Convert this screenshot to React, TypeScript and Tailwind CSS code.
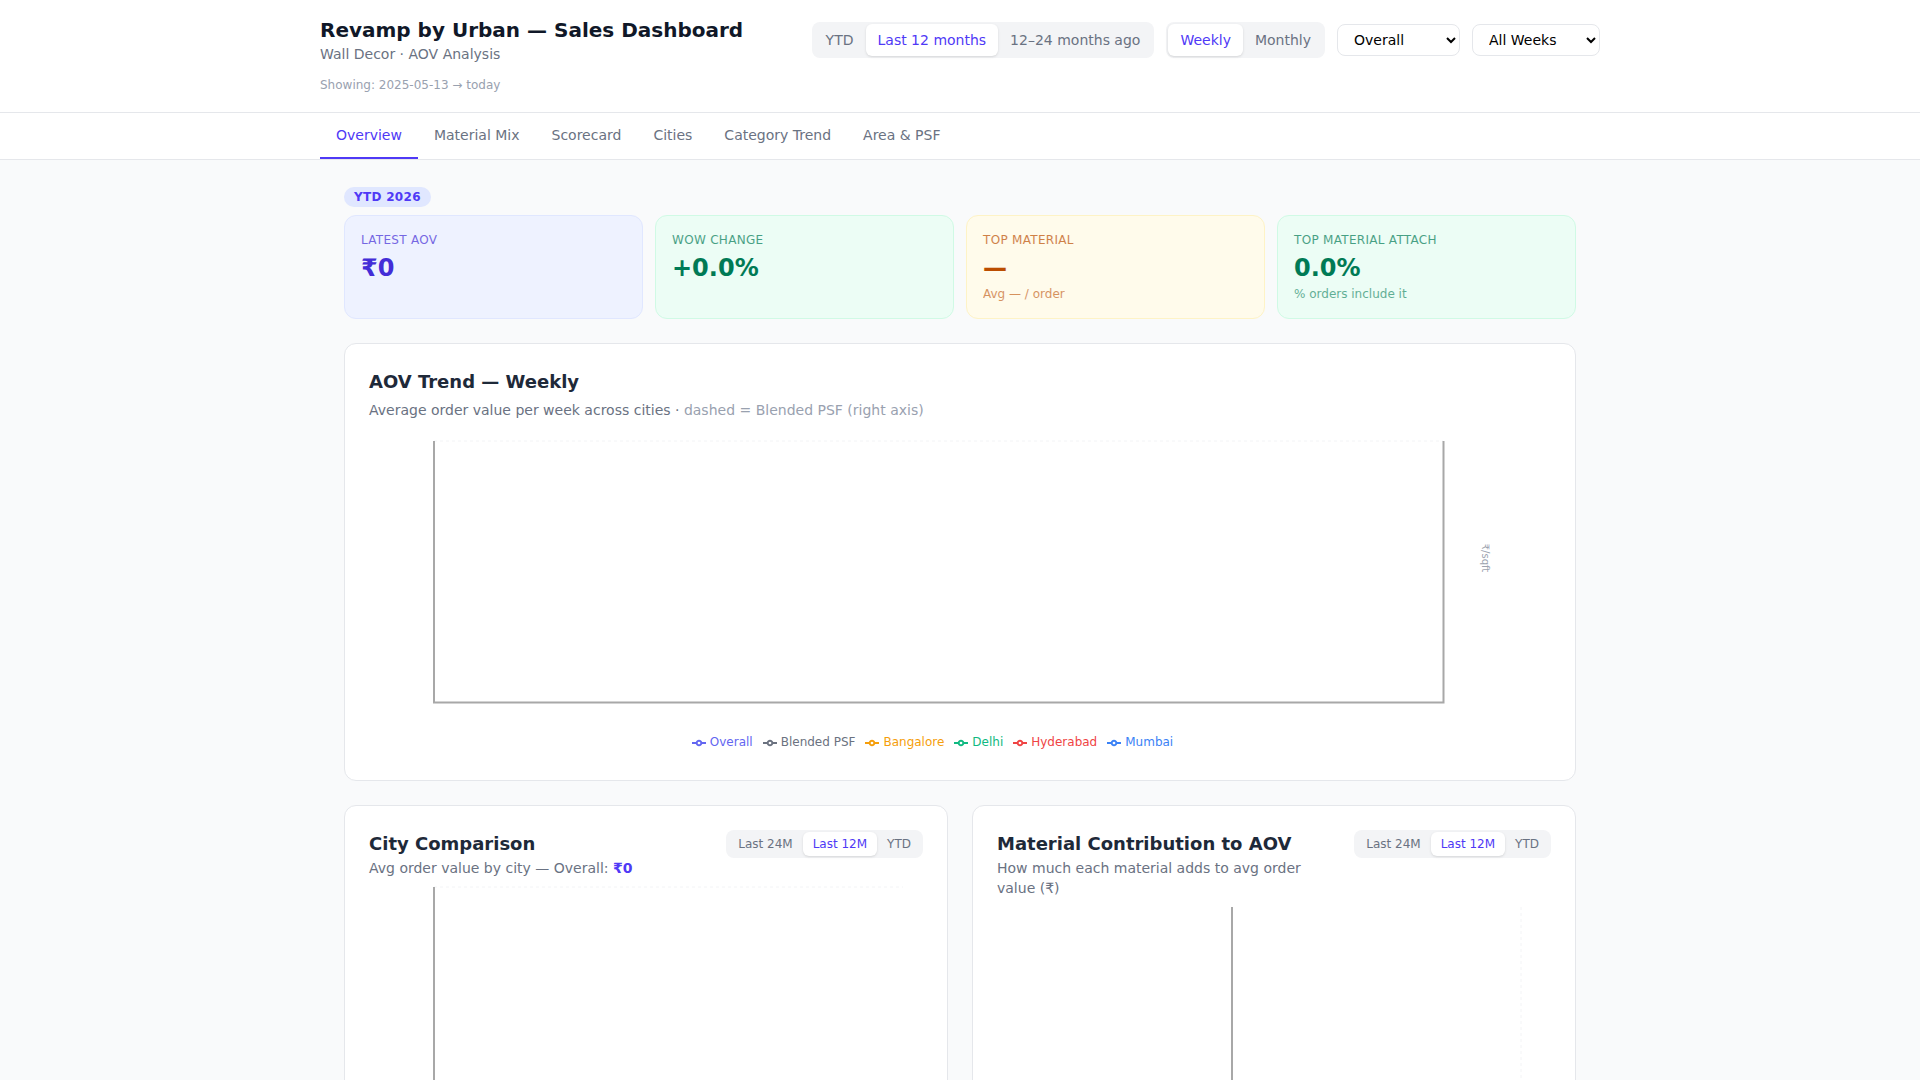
import { useState } from "react";

/* ===== Mock Data ===== */
const legendItems = [
  { name: "Overall", color: "#6366f1", textClass: "text-[#6366f1]" },
  { name: "Blended PSF", color: "#6b7280", textClass: "text-[#6b7280]" },
  { name: "Bangalore", color: "#f59e0b", textClass: "text-[#f59e0b]" },
  { name: "Delhi", color: "#10b981", textClass: "text-[#10b981]" },
  { name: "Hyderabad", color: "#ef4444", textClass: "text-[#ef4444]" },
  { name: "Mumbai", color: "#3b82f6", textClass: "text-[#3b82f6]" },
];

const tabs = ["Overview", "Material Mix", "Scorecard", "Cities", "Category Trend", "Area & PSF"];

/* ===== Components ===== */
function Segmented({
  options,
  active,
  small,
}: {
  options: string[];
  active: string;
  small?: boolean;
}) {
  const [current, setCurrent] = useState(active);
  return (
    <div className="flex shrink-0 rounded-lg bg-gray-100 p-0.5">
      {options.map((o) => (
        <button
          key={o}
          onClick={() => setCurrent(o)}
          className={[
            small ? "rounded-md px-2.5 py-1 text-xs" : "rounded-md px-3 py-1.5 text-sm",
            current === o ? "bg-white text-indigo-600 shadow-sm" : "text-gray-500",
          ].join(" ")}
        >
          {o}
        </button>
      ))}
    </div>
  );
}

function Stat({
  label,
  value,
  sub,
  box,
}: {
  label: string;
  value: string;
  sub?: string;
  box: string;
}) {
  return (
    <div className={"rounded-xl border p-4 " + box}>
      <p className="text-xs tracking-wide uppercase opacity-70">{label}</p>
      <p className="mt-1 text-2xl font-bold">{value}</p>
      {sub && <p className="mt-0.5 text-xs opacity-60">{sub}</p>}
    </div>
  );
}

function LegendIcon({ color }: { color: string }) {
  return (
    <svg width="14" height="14" viewBox="0 0 32 32" className="mt-0.5 mr-1 inline-block">
      <path
        strokeWidth="4.5"
        fill="none"
        stroke={color}
        d="M0,16h10.67A5.33,5.33,0,1,1,21.33,16H32M21.33,16A5.33,5.33,0,1,1,10.67,16"
      />
    </svg>
  );
}

function TrendChart() {
  return (
    <div className="h-[321px]">
      <svg width="1182" height="290" className="block">
        <line x1="65" y1="6" x2="1074" y2="6" stroke="#f3f4f6" strokeDasharray="3 3" />
        <path d="M65,6V267.5H1074.5V6" fill="none" stroke="#a8a8a8" strokeWidth="2" />
        <text
          x="1113"
          y="123"
          fontSize="10"
          fill="#9ca3af"
          textAnchor="middle"
          transform="rotate(90 1113 123)"
        >
          ₹/sqft
        </text>
      </svg>
      <div className="mt-[9px] flex justify-center gap-2.5 pr-[55px]">
        {legendItems.map((l) => (
          <span key={l.name} className={"flex items-center text-xs " + l.textClass}>
            <LegendIcon color={l.color} />
            {l.name}
          </span>
        ))}
      </div>
    </div>
  );
}

export default function App() {
  return (
    <div className="min-h-screen bg-gray-50 font-['DejaVu_Sans',sans-serif] antialiased">
      {/* Header */}
      <header className="border-b border-gray-200 bg-white">
        <div className="mx-auto flex max-w-7xl items-start justify-between pt-4 pb-[19px]">
          <div>
            <h1 className="text-xl font-bold text-gray-900">Revamp by Urban — Sales Dashboard</h1>
            <p className="text-sm text-gray-500">Wall Decor · AOV Analysis</p>
            <p className="mt-[13px] text-xs text-gray-400">Showing: 2025-05-13 → today</p>
          </div>
          <div className="mt-1.5 flex items-start gap-3">
            <Segmented options={["YTD", "Last 12 months", "12–24 months ago"]} active="Last 12 months" />
            <Segmented options={["Weekly", "Monthly"]} active="Weekly" />
            <select className="mt-0.5 w-[123px] rounded-lg border border-gray-200 bg-white px-3 py-1.5 text-sm text-black">
              <option>Overall</option>
              <option>Bangalore</option>
              <option>Delhi</option>
              <option>Hyderabad</option>
              <option>Mumbai</option>
            </select>
            <select className="mt-0.5 w-[128px] rounded-lg border border-gray-200 bg-white px-3 py-1.5 text-sm text-black">
              <option>All Weeks</option>
            </select>
          </div>
        </div>
      </header>

      {/* Tabs */}
      <nav className="border-b border-gray-200 bg-white">
        <div className="mx-auto flex max-w-7xl">
          {tabs.map((t, i) => (
            <button
              key={t}
              className={
                i === 0
                  ? "border-b-2 border-indigo-600 px-4 py-3 text-sm text-indigo-600"
                  : "border-b-2 border-transparent px-4 py-3 text-sm text-gray-500"
              }
            >
              {t}
            </button>
          ))}
        </div>
      </nav>

      {/* Content */}
      <main className="mx-auto max-w-7xl px-6 pt-[27px] pb-6">
        <span className="mb-2 block w-fit rounded-full bg-indigo-100 px-2.5 py-0.5 text-xs font-bold tracking-wide text-indigo-600">
          YTD 2026
        </span>
        <div className="grid grid-cols-4 gap-3">
          <Stat label="Latest AOV" value="₹0" box="border-indigo-100 bg-indigo-50 text-indigo-700" />
          <Stat label="WoW Change" value="+0.0%" box="border-emerald-100 bg-emerald-50 text-emerald-700" />
          <Stat label="Top Material" value="—" sub="Avg — / order" box="border-amber-100 bg-amber-50 text-amber-700" />
          <Stat
            label="Top Material Attach"
            value="0.0%"
            sub="% orders include it"
            box="border-emerald-100 bg-emerald-50 text-emerald-700"
          />
        </div>

        {/* AOV trend */}
        <section className="mt-6 rounded-xl border border-gray-200 bg-white p-6">
          <h2 className="text-lg font-bold text-gray-800">AOV Trend — Weekly</h2>
          <p className="mt-1 mb-[15px] text-sm text-gray-500">
            Average order value per week across cities · <span className="text-gray-400">dashed = Blended PSF (right axis)</span>
          </p>
          <TrendChart />
        </section>

        <div className="mt-6 grid grid-cols-2 gap-6">
          <section className="rounded-xl border border-gray-200 bg-white p-6">
            <div className="mb-1 flex items-start justify-between gap-3">
              <div>
                <h2 className="text-lg font-bold text-gray-800">City Comparison</h2>
                <p className="text-sm text-gray-500">
                  Avg order value by city — Overall: <span className="font-bold text-indigo-600">₹0</span>
                </p>
              </div>
              <Segmented small options={["Last 24M", "Last 12M", "YTD"]} active="Last 12M" />
            </div>
            <svg width="554" height="300" className="block">
              <line x1="65" y1="5" x2="534" y2="5" stroke="#f3f4f6" strokeDasharray="3 3" />
              <path d="M65,5V300" fill="none" stroke="#a8a8a8" strokeWidth="2" />
            </svg>
          </section>

          <section className="rounded-xl border border-gray-200 bg-white p-6">
            <div className="mb-1 flex items-start justify-between gap-3">
              <div>
                <h2 className="text-lg font-bold text-gray-800">Material Contribution to AOV</h2>
                <p className="text-sm text-gray-500">How much each material adds to avg order value (₹)</p>
              </div>
              <Segmented small options={["Last 24M", "Last 12M", "YTD"]} active="Last 12M" />
            </div>
            <svg width="554" height="300" className="block">
              <line x1="524" y1="5" x2="524" y2="300" stroke="#f3f4f6" strokeDasharray="3 3" />
              <path d="M235,5V300" fill="none" stroke="#a8a8a8" strokeWidth="2" />
            </svg>
          </section>
        </div>
      </main>
    </div>
  );
}
